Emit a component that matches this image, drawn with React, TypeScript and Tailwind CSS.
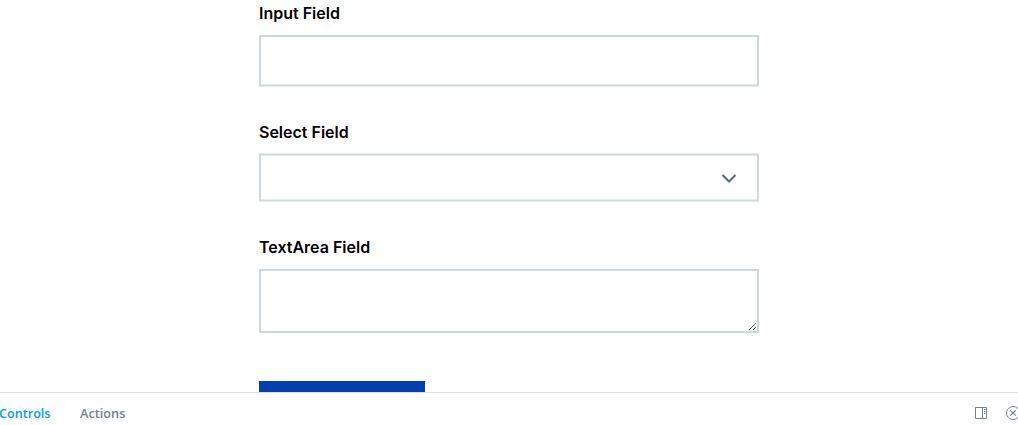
function Label({ htmlFor, children }: { htmlFor: string; children: string }) {
  return (
    <label
      htmlFor={htmlFor}
      className="block h-6 whitespace-nowrap text-[16px] leading-6 font-semibold text-black"
    >
      {children}
    </label>
  );
}

export default function App() {
  return (
    <div className="flex h-[425px] w-full flex-col overflow-hidden bg-white font-['Inter',sans-serif]">
      <main className="h-[392px] shrink-0 overflow-hidden">
        <form className="mx-auto flex w-[500px] flex-col pt-px">
          <Label htmlFor="input">Input Field</Label>
          <input
            id="input"
            className="mt-[10px] block h-[51px] w-full origin-top scale-y-[1.01] border-2 border-[#cfd8dc] bg-white px-4 outline-none"
          />
          <div className="mt-[34px]">
            <Label htmlFor="select">Select Field</Label>
          </div>
          <button
            id="select"
            type="button"
            className="mt-[9px] flex h-12 w-full translate-y-[0.5px] items-center justify-end border-2 border-[#cfd8dc] bg-white pr-5"
          >
            <svg width="16" height="16" viewBox="0 0 16 16" fill="none" className="mt-px">
              <path d="M1.5 4.5 L8 11 L14.5 4.5" stroke="#546e7a" strokeWidth="2.1" />
            </svg>
          </button>
          <div className="mt-[34px]">
            <Label htmlFor="textarea">TextArea Field</Label>
          </div>
          <textarea
            id="textarea"
            className="mt-[10px] block h-16 w-full border-2 border-[#cfd8dc] bg-white p-4 outline-none"
          />
          <button type="button" aria-label="Submit" className="mt-12 h-12 w-[166px] bg-[#053eae]" />
        </form>
      </main>
      <footer className="flex h-[33px] shrink-0 items-start justify-between border-t border-[#d5dfe6] font-['Open_Sans',sans-serif] text-[13px] leading-5 font-semibold">
        <nav className="flex pt-[10px]">
          <span className="w-[80px] text-[#029cfd]">
            <span className="inline-block origin-left -translate-x-px scale-x-[0.97]">Controls</span>
          </span>
          <span className="text-[#73828c]">
            <span className="inline-block origin-left scale-x-[0.98]">Actions</span>
          </span>
        </nav>
        <div className="-mr-[2px] flex gap-[18px] pt-[13px]">
          <svg width="14" height="14" viewBox="0 0 14 14" fill="none" stroke="#73828c">
            <path d="M1.5 1.5h11v11h-11zM8.5 1.5v11" />
            <path d="M10 3.5h1.5M10 5.5h1.5M10 7.5h1.5" />
          </svg>
          <svg width="14" height="14" viewBox="0 0 14 14" fill="none" stroke="#73828c">
            <circle cx="7" cy="7" r="6.5" />
            <path d="M4.3 4.3l5.4 5.4M9.7 4.3l-5.4 5.4" strokeWidth="1.2" />
          </svg>
        </div>
      </footer>
    </div>
  );
}
